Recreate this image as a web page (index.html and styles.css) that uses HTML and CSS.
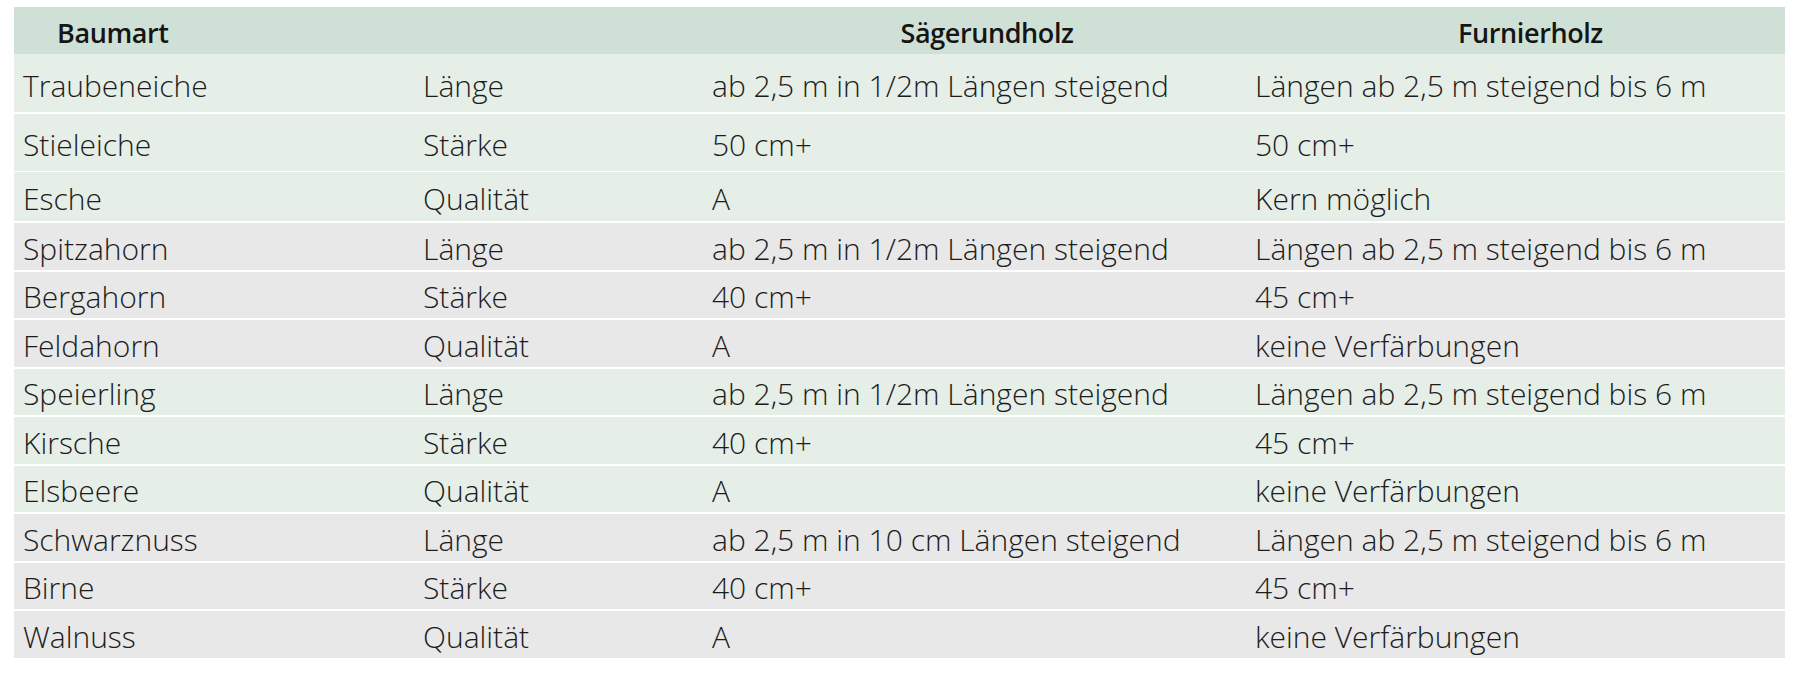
FILE: index.html
```html
<!DOCTYPE html>
<html lang="de">
<head>
<meta charset="utf-8">
<title>Holzsortierung</title>
<link rel="stylesheet" href="styles.css">
</head>
<body>
<div class="table">
  <div class="row head">
    <div class="cell h1">Baumart</div>
    <div class="cell"></div>
    <div class="cell h3">Sägerundholz</div>
    <div class="cell h4">Furnierholz</div>
  </div>
  <div class="row green r1"><div class="cell">Traubeneiche</div><div class="cell">Länge</div><div class="cell">ab 2,5 m in 1/2m Längen steigend</div><div class="cell">Längen ab 2,5 m steigend bis 6 m</div></div>
  <div class="row green r2"><div class="cell">Stieleiche</div><div class="cell">Stärke</div><div class="cell">50 cm+</div><div class="cell">50 cm+</div></div>
  <div class="row green r3"><div class="cell">Esche</div><div class="cell">Qualität</div><div class="cell">A</div><div class="cell">Kern möglich</div></div>
  <div class="row gray"><div class="cell">Spitzahorn</div><div class="cell">Länge</div><div class="cell">ab 2,5 m in 1/2m Längen steigend</div><div class="cell">Längen ab 2,5 m steigend bis 6 m</div></div>
  <div class="row gray"><div class="cell">Bergahorn</div><div class="cell">Stärke</div><div class="cell">40 cm+</div><div class="cell">45 cm+</div></div>
  <div class="row gray"><div class="cell">Feldahorn</div><div class="cell">Qualität</div><div class="cell">A</div><div class="cell">keine Verfärbungen</div></div>
  <div class="row green"><div class="cell">Speierling</div><div class="cell">Länge</div><div class="cell">ab 2,5 m in 1/2m Längen steigend</div><div class="cell">Längen ab 2,5 m steigend bis 6 m</div></div>
  <div class="row green"><div class="cell">Kirsche</div><div class="cell">Stärke</div><div class="cell">40 cm+</div><div class="cell">45 cm+</div></div>
  <div class="row green"><div class="cell">Elsbeere</div><div class="cell">Qualität</div><div class="cell">A</div><div class="cell">keine Verfärbungen</div></div>
  <div class="row gray"><div class="cell">Schwarznuss</div><div class="cell">Länge</div><div class="cell">ab 2,5 m in 10 cm Längen steigend</div><div class="cell">Längen ab 2,5 m steigend bis 6 m</div></div>
  <div class="row gray"><div class="cell">Birne</div><div class="cell">Stärke</div><div class="cell">40 cm+</div><div class="cell">45 cm+</div></div>
  <div class="row gray"><div class="cell">Walnuss</div><div class="cell">Qualität</div><div class="cell">A</div><div class="cell">keine Verfärbungen</div></div>
</div>
</body>
</html>
```

FILE: styles.css
```css
html, body {
  margin: 0;
  padding: 0;
  background: #ffffff;
}

body {
  font-family: "Open Sans", "Liberation Sans", sans-serif;
  font-weight: 300;
  color: #1c1c1c;
}

.table {
  margin: 7px 0 0 14px;
  width: 1771px;
  display: flex;
  flex-direction: column;
  gap: 2px;
}

.row {
  display: grid;
  grid-template-columns: 400px 289px 543px 539px;
  height: 46.5px;
  align-items: center;
  font-size: 30px;
}

.cell {
  padding: 4px 0 0 9px;
  white-space: nowrap;
}

.head {
  background: #cfe1d6;
  height: 47px;
  font-size: 27px;
  font-weight: 600;
  letter-spacing: -0.4px;
  color: #151515;
  margin-bottom: -2px;
}

.head .cell {
  padding-top: 3px;
}

.head .h1 {
  padding-left: 43px;
}

.head .h3,
.head .h4 {
  text-align: center;
  padding-left: 25px;
}

.head .h4 {
  padding-left: 30px;
}

.green {
  background: #e6eee8;
}

.gray {
  background: #e8e8e8;
}

.r1 {
  height: 58px;
}

.r2 {
  height: 57px;
  margin-bottom: -1px;
}

.r3 {
  height: 49px;
}
```
